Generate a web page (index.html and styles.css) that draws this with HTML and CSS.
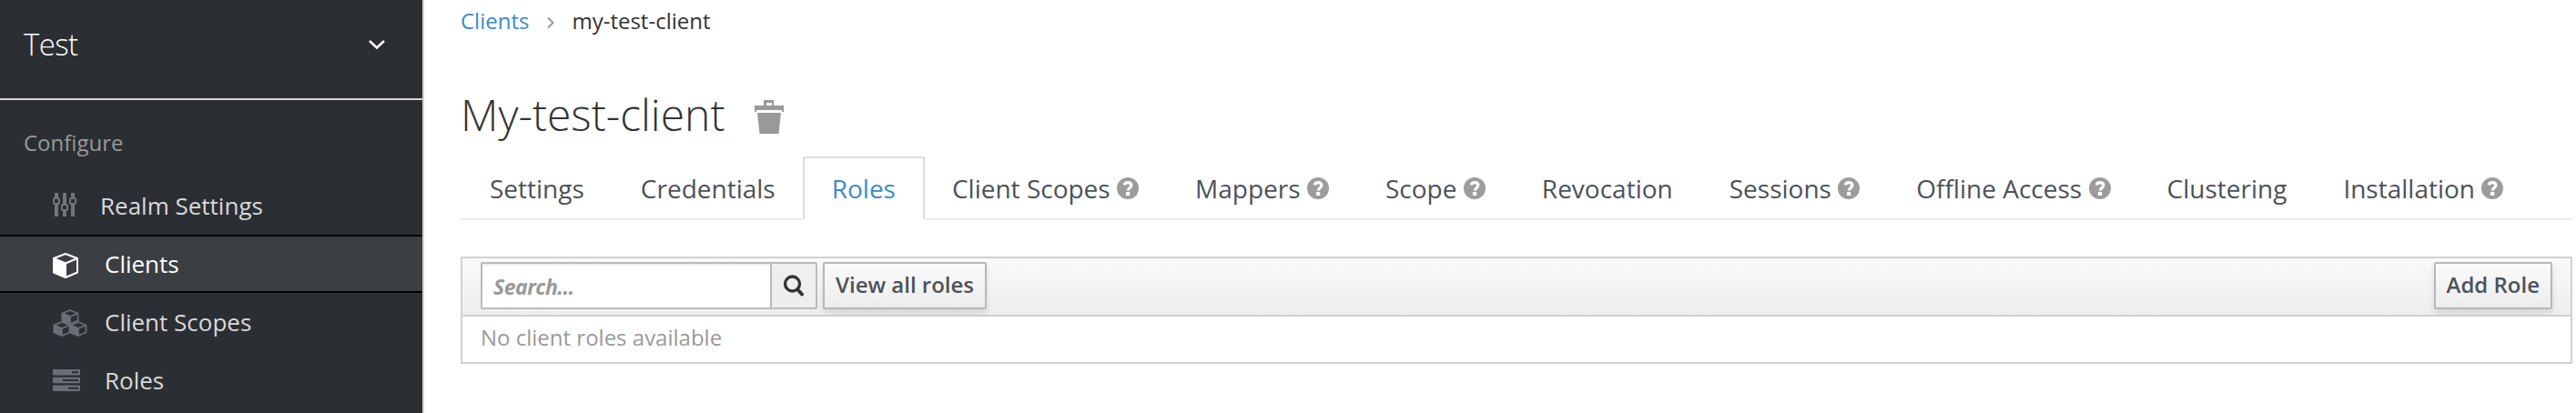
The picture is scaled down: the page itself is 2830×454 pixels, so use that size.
FILE: index.html
```html
<!DOCTYPE html>
<html lang="en">
<head>
<meta charset="utf-8">
<title>my-test-client</title>
<link rel="stylesheet" href="styles.css">
</head>
<body>
<svg class="defs" width="0" height="0">
  <symbol id="help" viewBox="0 0 24 24">
    <circle cx="12" cy="12" r="12" fill="#9c9c9c"/>
    <path d="M8 8.200C9 6.300 10.300 5.700 12 5.700c2.300 0 3.900 1.200 3.900 3.100 0 2.600-3.700 2.700-3.700 5.700" fill="none" stroke="#fff" stroke-width="3.200"/>
    <rect x="10" y="16" width="4.200" height="4" fill="#fff"/>
  </symbol>
</svg>
<div class="app">
  <aside class="sidebar">
    <div class="realm"><span>Test</span>
      <svg class="chevron" width="20" height="12" viewBox="0 0 20 12"><path d="M2 2l8 7.500L18 2" fill="none" stroke="#fff" stroke-width="2.400"/></svg>
    </div>
    <h2 class="group">Configure</h2>
    <nav class="menu">
      <a class="item item-realm"><svg width="26" height="26" viewBox="0 0 26 26" fill="none" stroke="#72767b" stroke-width="2"><path d="M4 0v6M4 12v14M13 0v13M13 19v7M22 0v6M22 12v14" stroke-width="4"/><rect x="1" y="6" width="6" height="6" rx="1"/><rect x="10" y="13" width="6" height="6" rx="1"/><rect x="19" y="6" width="6" height="6" rx="1"/></svg><span>Realm Settings</span></a>
      <a class="item active"><svg class="cube" width="28" height="28" viewBox="0 0 28 28"><path d="M14 1l13 5v15.500L14 27 1 21.500V6z" fill="none" stroke="#fff" stroke-width="2" stroke-linejoin="round"/><path d="M1 6l13 5.500L27 6" fill="none" stroke="#fff" stroke-width="2"/><path d="M1 6l14 5.500V27L1 21.500z" fill="#fff"/></svg><span>Clients</span></a>
      <a class="item"><svg class="cubes" width="38" height="30" viewBox="0 0 38 30" fill="none" stroke="#6a6e78" stroke-width="1.700" stroke-linejoin="round"><g id="box"><path d="M19 1l8.500 3.500v8L19 16l-8.500-3.500v-8z"/><path d="M10.500 4.500L19 8l8.500-3.500"/><path d="M10.500 4.500L19 8v8l-8.500-3.500z" fill="#6a6e78"/></g><use href="#box" x="-9" y="13"/><use href="#box" x="9" y="13"/></svg><span>Client Scopes</span></a>
      <a class="item"><svg width="30" height="24" viewBox="0 0 30 24" fill="#6a6e78"><rect width="30" height="6.500" rx="1"/><rect y="8.800" width="30" height="6.500" rx="1"/><rect y="17.500" width="30" height="6.500" rx="1"/><path d="M21 2.300h7v2h-7zM11 11h17v2H11zM17 19.800h11v2H17z" fill="#2b2e33"/></svg><span>Roles</span></a>
    </nav>
  </aside>
  <main class="content">
    <div class="crumbs"><a>Clients</a><svg width="8" height="14" viewBox="0 0 8 14"><path d="M1 1.500L6.500 7 1 12.500" fill="none" stroke="#9c9c9c" stroke-width="2"/></svg><span>my-test-client</span></div>
    <h1 class="title"><span>My-test-client</span>
      <svg width="32" height="37" viewBox="0 0 32 37" fill="#999"><path d="M0 6h10V0h11v6h11v7h-2v-2H2v2H0zM13 3v3h6V3z" fill-rule="evenodd"/><path d="M3 14h26l-2.500 23h-21z"/></svg>
    </h1>
    <div class="tabs">
      <a>Settings</a><a>Credentials</a><a class="on">Roles</a>
      <a>Client Scopes<svg><use href="#help"/></svg></a><a>Mappers<svg><use href="#help"/></svg></a><a>Scope<svg><use href="#help"/></svg></a>
      <a>Revocation</a><a>Sessions<svg><use href="#help"/></svg></a><a>Offline Access<svg><use href="#help"/></svg></a>
      <a>Clustering</a><a>Installation<svg><use href="#help"/></svg></a>
    </div>
    <section class="table">
      <div class="toolbar">
        <div class="search"><div class="field">Search...</div><div class="go"><svg width="24" height="24" viewBox="0 0 24 24" fill="none" stroke="#333" stroke-width="3.300"><circle cx="10.500" cy="10" r="8"/><path d="M16 16l5 5.500" stroke-width="4" stroke-linecap="round"/></svg></div></div>
        <div class="btn">View all roles</div>
        <div class="btn add">Add Role</div>
      </div>
      <div class="empty">No client roles available</div>
    </section>
  </main>
</div>
</body>
</html>
```
FILE: styles.css
```css
* { box-sizing: border-box; }
body { margin: 0; background: #fff; font-family: "Open Sans", sans-serif; font-size: 24px; color: #333; overflow: hidden; }
.defs { display: block; height: 0; }
svg { flex: none; }
.app { display: flex; height: 454px; }
.sidebar { width: 466px; flex: none; background: #2b2e33; border-right: 2px solid #d1d1d1; }
.realm { display: flex; justify-content: space-between; align-items: center; height: 110px; padding: 0 40px 12px 26px; border-bottom: 2px solid #d9d4d6; color: #fff; font-size: 33px; font-weight: 350; letter-spacing: -0.6px; }
.chevron { margin-top: 2px; }
.group { margin: 0; padding: 29px 26px 0; height: 84px; font-size: 24px; line-height: 36px; font-weight: 400; color: #999; }
.item { display: grid; grid-template-columns: 57px 1fr; align-items: center; height: 64px; padding: 0 58px; font-size: 26px; color: #d9d9d9; border-top: 2px solid transparent; border-bottom: 2px solid transparent; }
.item-realm svg { margin-top: -2px; }
.item-realm span { margin-left: -5px; }
.cube { margin-top: 4px; }
.cubes { margin-top: 2px; }
.active { background: #3b3f43; border-color: #000; color: #fff; }
.content { width: 2360px; flex: none; padding-left: 40px; }
.crumbs { display: flex; align-items: center; height: 48px; line-height: 46px; }
.crumbs a, .crumbs span { margin-top: -2px; }
.crumbs a { color: #3a8bcc; }
.crumbs svg { margin: 2px 19px 0 20px; }
.title { display: flex; align-items: center; margin: 0; height: 124px; padding-top: 36px; font-size: 48px; line-height: 64px; font-weight: 300; }
.title span { margin-top: -4px; }
.title svg { margin-left: 33px; }
.tabs { display: flex; height: 70px; border-bottom: 2px solid #ededed; font-size: 28px; color: #4d5258; }
.tabs a { display: flex; align-items: center; height: 70px; padding: 0 30px; border: 2px solid transparent; margin-right: -2px; white-space: nowrap; }
.tabs svg { width: 24px; height: 24px; margin-left: 7.4px; }
.tabs .on { color: #3a8bcc; background: #fff; border-color: #ddd; border-bottom-color: #fff; border-radius: 2px 2px 0 0; }
.table { margin-top: 40px; border: 2px solid #d1d1d1; }
.toolbar { display: flex; height: 64px; padding: 4px 20px; border-bottom: 2px solid #d1d1d1; background: linear-gradient(#fafafa, #ededed); }
.search { display: flex; width: 370px; height: 52px; border: 2px solid #bbb; border-radius: 2px; }
.field { flex: 1; background: #fff; padding-left: 12px; line-height: 50px; font-weight: 700; font-style: italic; font-size: 23px; letter-spacing: -0.5px; color: #999; box-shadow: inset 0 2px 2px rgba(0,0,0,.075); }
.go { width: 50px; border-left: 2px solid #bbb; background: #eee; display: grid; place-items: center; }
.btn { height: 52px; margin-left: 6px; padding: 0 12px; border: 2px solid #b7b7b7; border-radius: 2px; background: linear-gradient(#fafafa, #ededed); box-shadow: 0 4px 6px rgba(3,3,3,.1); color: #4d5258; font-weight: 600; line-height: 46px; }
.add { margin-left: auto; }
.empty { height: 50px; padding-left: 20px; line-height: 46px; color: #999; }
```
